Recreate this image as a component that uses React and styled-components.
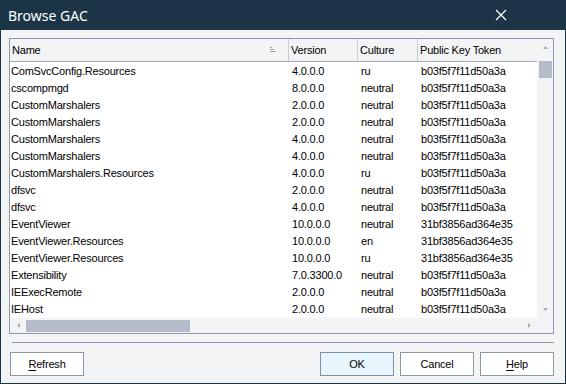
import styled, { createGlobalStyle } from "styled-components";

const GlobalStyle = createGlobalStyle`
    html, body {
        margin: 0;
        padding: 0;
        background: #f3f4f6;
    }
    * {
        box-sizing: border-box;
    }
`;

const assemblies = [
    ["ComSvcConfig.Resources", "4.0.0.0", "ru", "b03f5f7f11d50a3a"],
    ["cscompmgd", "8.0.0.0", "neutral", "b03f5f7f11d50a3a"],
    ["CustomMarshalers", "2.0.0.0", "neutral", "b03f5f7f11d50a3a"],
    ["CustomMarshalers", "2.0.0.0", "neutral", "b03f5f7f11d50a3a"],
    ["CustomMarshalers", "4.0.0.0", "neutral", "b03f5f7f11d50a3a"],
    ["CustomMarshalers", "4.0.0.0", "neutral", "b03f5f7f11d50a3a"],
    ["CustomMarshalers.Resources", "4.0.0.0", "ru", "b03f5f7f11d50a3a"],
    ["dfsvc", "2.0.0.0", "neutral", "b03f5f7f11d50a3a"],
    ["dfsvc", "4.0.0.0", "neutral", "b03f5f7f11d50a3a"],
    ["EventViewer", "10.0.0.0", "neutral", "31bf3856ad364e35"],
    ["EventViewer.Resources", "10.0.0.0", "en", "31bf3856ad364e35"],
    ["EventViewer.Resources", "10.0.0.0", "ru", "31bf3856ad364e35"],
    ["Extensibility", "7.0.3300.0", "neutral", "b03f5f7f11d50a3a"],
    ["IEExecRemote", "2.0.0.0", "neutral", "b03f5f7f11d50a3a"],
    ["IEHost", "2.0.0.0", "neutral", "b03f5f7f11d50a3a"],
];

const columns = "279px 69px 60px 1fr";

const App = () => {
    return (
        <>
            <GlobalStyle/>
            <Window>
                <TitleBar>
                    <Title>Browse GAC</Title>
                    <CloseIcon width="12" height="12" viewBox="0 0 12 12">
                        <path d="M1 1 L11 11 M11 1 L1 11" stroke="#ffffff" strokeWidth="1.3"/>
                    </CloseIcon>
                </TitleBar>
                <Body>
                    <ListBox>
                        <ListMain>
                            <HeaderRow>
                                <HeaderCell>
                                    Name
                                    <SortGlyph width="7" height="6" viewBox="0 0 7 6">
                                        <path d="M0 0.5 H2 M0 2.5 H4 M0 4.5 H6" stroke="#9aa3ae" strokeWidth="1"/>
                                    </SortGlyph>
                                </HeaderCell>
                                <HeaderCell>Version</HeaderCell>
                                <HeaderCell>Culture</HeaderCell>
                                <HeaderCell $last>Public Key Token</HeaderCell>
                            </HeaderRow>
                            <Rows>
                                {assemblies.map((row, i) => (
                                    <Row key={i}>
                                        {row.map((cell, j) => (
                                            <Cell key={j} $first={j === 0}>{cell}</Cell>
                                        ))}
                                    </Row>
                                ))}
                            </Rows>
                            <HScroll>
                                <ArrowBox>
                                    <svg width="3" height="5" viewBox="0 0 3 5"><path d="M3 0 L0 2.5 L3 5 Z" fill="#a4abb6"/></svg>
                                </ArrowBox>
                                <HTrack>
                                    <HThumb/>
                                </HTrack>
                                <ArrowBox>
                                    <svg width="3" height="5" viewBox="0 0 3 5"><path d="M0 0 L3 2.5 L0 5 Z" fill="#a4abb6"/></svg>
                                </ArrowBox>
                            </HScroll>
                        </ListMain>
                        <VScrollColumn>
                            <VScroll>
                                <VArrow>
                                    <svg width="5" height="3" viewBox="0 0 5 3"><path d="M0 3 L2.5 0 L5 3 Z" fill="#a4abb6"/></svg>
                                </VArrow>
                                <VTrack>
                                    <VThumb/>
                                </VTrack>
                                <VArrow>
                                    <svg width="5" height="3" viewBox="0 0 5 3"><path d="M0 0 L2.5 3 L5 0 Z" fill="#a4abb6"/></svg>
                                </VArrow>
                            </VScroll>
                            <Corner/>
                        </VScrollColumn>
                    </ListBox>
                    <Separator/>
                    <ButtonBar>
                        <Button><u>R</u>efresh</Button>
                        <Spacer/>
                        <Button $default>OK</Button>
                        <Button>Cancel</Button>
                        <Button><u>H</u>elp</Button>
                    </ButtonBar>
                </Body>
            </Window>
        </>
    );
};

export default App;

const Window = styled.div`
    width: 566px;
    height: 384px;
    display: flex;
    flex-direction: column;
    background: #f3f4f6;
    border: 1px solid #1b3446;
    border-top: none;
    font-family: "Liberation Sans", Arial, sans-serif;
    font-size: 11px;
    letter-spacing: -0.2px;
    color: #000000;
`;

const TitleBar = styled.div`
    height: 30px;
    margin: 0 -1px;
    padding: 0 0 0 8px;
    display: flex;
    align-items: center;
    justify-content: space-between;
    background: #1b3446;
`;

const Title = styled.span`
    color: #ffffff;
    font-size: 14px;
    letter-spacing: 0;
    font-family: "Noto Sans", "Liberation Sans", sans-serif;
`;

const CloseIcon = styled.svg`
    margin-right: 59px;
`;

const Body = styled.div`
    flex: 1;
    display: flex;
    flex-direction: column;
    padding: 8px 11px 6px 8px;
`;

const ListBox = styled.div`
    height: 296px;
    display: flex;
    border: 1px solid #8c98aa;
    background: #ffffff;
`;

const ListMain = styled.div`
    flex: 1;
    display: flex;
    flex-direction: column;
    min-width: 0;
`;

const HeaderRow = styled.div`
    height: 23px;
    display: grid;
    grid-template-columns: ${columns};
    background: #f3f4f6;
    border-bottom: 1px solid #a3abb7;
`;

const HeaderCell = styled.div`
    display: flex;
    align-items: center;
    justify-content: space-between;
    padding: 0 0 0 2px;
    border-right: ${props => props.$last ? "none" : "1px solid #c9ced6"};
    white-space: nowrap;
    overflow: hidden;
`;

const SortGlyph = styled.svg`
    margin-right: 11px;
`;

const Rows = styled.div`
    flex: 1;
    display: flex;
    flex-direction: column;
    overflow: hidden;
`;

const Row = styled.div`
    height: 17px;
    flex-shrink: 0;
    display: grid;
    grid-template-columns: ${columns};
    align-items: center;
`;

const Cell = styled.div`
    padding-left: ${props => props.$first ? "1px" : "3px"};
    white-space: nowrap;
    overflow: hidden;
`;

const HScroll = styled.div`
    height: 15px;
    display: flex;
    align-items: center;
    background: #f3f4f6;
`;

const ArrowBox = styled.div`
    width: 16px;
    height: 15px;
    display: flex;
    align-items: center;
    justify-content: center;
`;

const HTrack = styled.div`
    flex: 1;
    height: 15px;
    display: flex;
    align-items: center;
`;

const HThumb = styled.div`
    width: 164px;
    height: 12px;
    background: #b4bcc9;
`;

const VScrollColumn = styled.div`
    width: 16px;
    display: flex;
    flex-direction: column;
    background: #f3f4f6;
`;

const VScroll = styled.div`
    flex: 1;
    display: flex;
    flex-direction: column;
    align-items: center;
`;

const VArrow = styled.div`
    width: 16px;
    height: 17px;
    display: flex;
    align-items: center;
    justify-content: center;
`;

const VTrack = styled.div`
    flex: 1;
    width: 16px;
    display: flex;
    justify-content: center;
    padding-top: 5px;
`;

const VThumb = styled.div`
    width: 13px;
    height: 17px;
    background: #b4bcc9;
`;

const Corner = styled.div`
    height: 15px;
`;

const Separator = styled.div`
    margin: 8px 0 0 3px;
    height: 1px;
    background: #8c98aa;
`;

const ButtonBar = styled.div`
    display: flex;
    gap: 6px;
    margin-top: 9px;
    padding-left: 1px;
`;

const Spacer = styled.div`
    flex: 1;
`;

const Button = styled.button`
    width: 74px;
    height: 24px;
    padding: 0;
    font-family: "Liberation Sans", Arial, sans-serif;
    font-size: 11px;
    letter-spacing: -0.2px;
    color: #000000;
    border: 1px solid ${props => props.$default ? "#7e8fa8" : "#8c98aa"};
    background: ${props => props.$default ? "#e6f4fc" : "#ffffff"};
    cursor: pointer;

    u {
        text-decoration-thickness: 1px;
        text-underline-offset: 2px;
    }
`;
